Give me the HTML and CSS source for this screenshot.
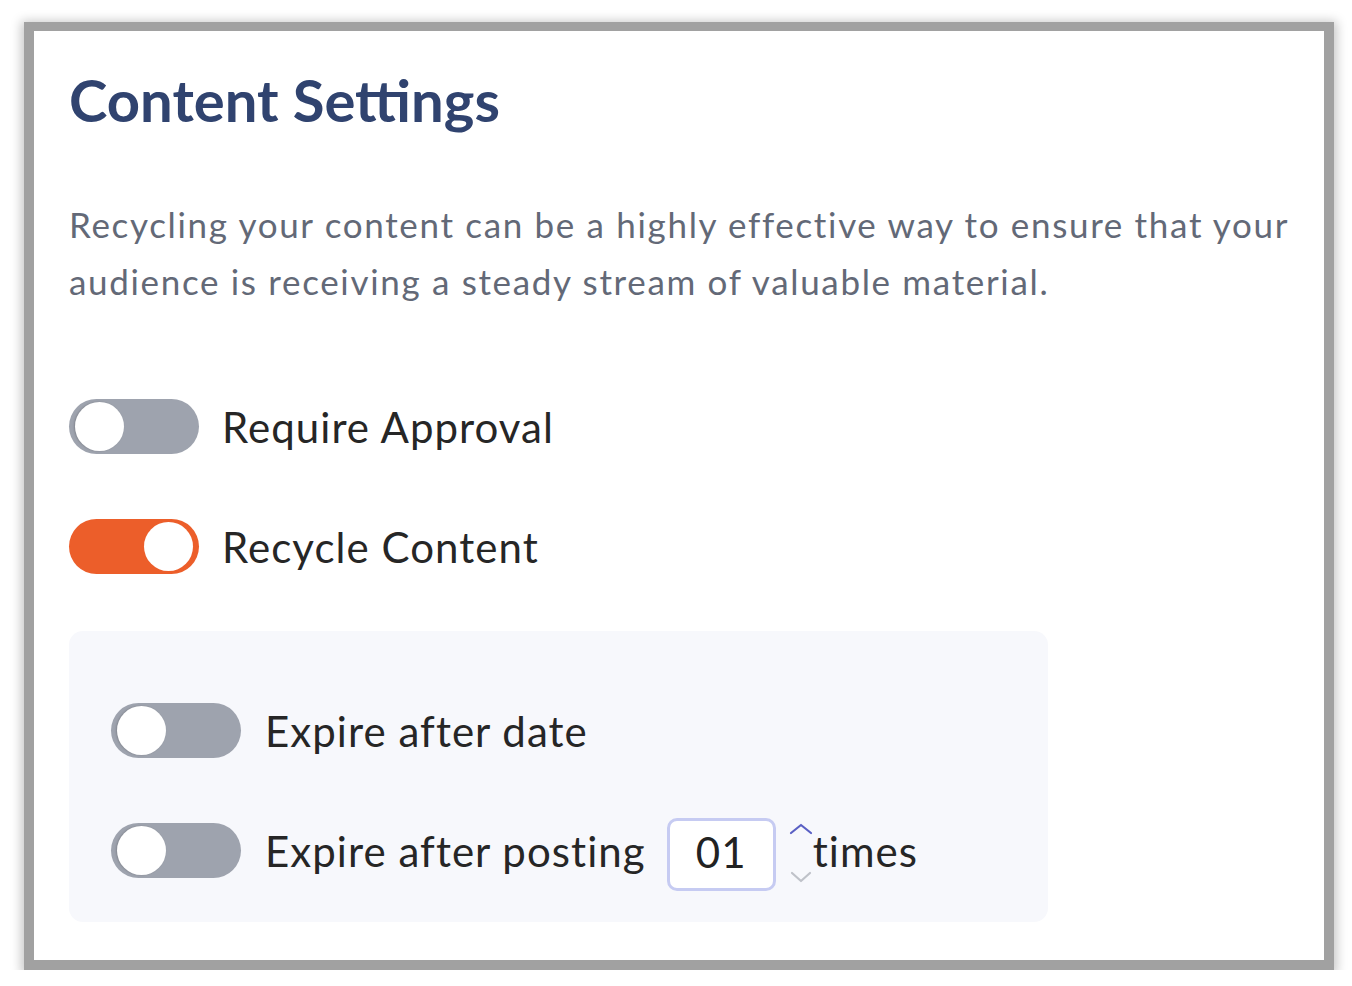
FILE: index.html
```html
<!DOCTYPE html>
<html lang="en">
<head>
<meta charset="utf-8">
<title>Content Settings</title>
<link rel="stylesheet" href="styles.css">
</head>
<body>
<div class="card">
  <h1 class="title">Content Settings</h1>
  <p class="desc">Recycling your content can be a highly effective way to ensure that your audience is receiving a steady stream of valuable material.</p>
  <div class="row row-first">
    <span class="toggle"><span class="knob"></span></span>
    <span class="label">Require Approval</span>
  </div>
  <div class="row row-second">
    <span class="toggle on"><span class="knob"></span></span>
    <span class="label">Recycle Content</span>
  </div>
  <div class="panel">
    <div class="row">
      <span class="toggle"><span class="knob"></span></span>
      <span class="label">Expire after date</span>
    </div>
    <div class="row row-second">
      <span class="toggle"><span class="knob"></span></span>
      <span class="label">Expire after posting</span>
      <span class="num">01</span>
      <span class="spin">
        <svg class="chev" width="24" height="12" viewBox="0 0 24 12"><path d="M2 10 L12 2 L22 10" fill="none" stroke="#5a60c4" stroke-width="2.2" stroke-linecap="round" stroke-linejoin="round"/></svg>
        <svg class="chev" width="24" height="12" viewBox="0 0 24 12"><path d="M3 2 L12 10 L21 2" fill="none" stroke="#bfc2c9" stroke-width="2.2" stroke-linecap="round" stroke-linejoin="round"/></svg>
      </span>
      <span class="label times">times</span>
    </div>
  </div>
</div>
</body>
</html>
```
FILE: styles.css
```css
html, body {
  margin: 0;
  padding: 0;
  background: #ffffff;
}
body {
  font-family: "Lato", "Open Sans", sans-serif;
}
.card {
  box-sizing: border-box;
  margin: 22px 0 0 24px;
  width: 1310px;
  height: 948px;
  border: 10px solid #a1a1a1;
  border-top-width: 9px;
  background: #ffffff;
  box-shadow: 0 2px 10px 3px rgba(0, 0, 0, 0.22);
  padding: 40px 0 0 35px;
}
.title {
  margin: 0;
  font-size: 58px;
  line-height: 58px;
  font-weight: 700;
  color: #30436f;
  letter-spacing: 0;
}
.desc {
  margin: 67px 0 0 0;
  font-size: 35px;
  line-height: 57px;
  letter-spacing: 1.67px;
  color: #636977;
  width: 1240px;
}
.row {
  display: flex;
  align-items: center;
  height: 55px;
  margin-top: 0;
}
.row-first {
  margin-top: 89px;
}
.row-second {
  margin-top: 65px;
}
.toggle {
  position: relative;
  box-sizing: border-box;
  flex: none;
  width: 130px;
  height: 55px;
  border-radius: 28px;
  background: #9ea3ae;
}
.toggle.on {
  background: #ec5e2a;
}
.knob {
  position: absolute;
  top: 3px;
  left: 6px;
  width: 49px;
  height: 49px;
  border-radius: 50%;
  background: #ffffff;
  box-shadow: -1px 0 2px rgba(0, 0, 0, 0.18);
}
.toggle.on .knob {
  left: auto;
  right: 6px;
  box-shadow: none;
}
.label {
  margin-left: 23px;
  font-size: 42px;
  letter-spacing: 1.05px;
  color: #262626;
  white-space: nowrap;
}
.panel {
  margin-top: 57px;
  width: 979px;
  box-sizing: border-box;
  background: #f7f8fc;
  border-radius: 14px;
  padding: 72px 42px 44px 42px;
}
.panel .label {
  margin-left: 24px;
}
.num {
  box-sizing: border-box;
  margin: 7px 0 0 21px;
  width: 109px;
  height: 73px;
  padding-bottom: 4px;
  border: 3px solid #c6cbf2;
  border-radius: 10px;
  background: #ffffff;
  font-size: 42px;
  letter-spacing: 1px;
  color: #222222;
  display: flex;
  align-items: center;
  justify-content: center;
}
.spin {
  display: flex;
  flex-direction: column;
  justify-content: space-between;
  height: 60px;
  margin: 4px 0 0 13px;
}
.chev {
  display: block;
}
.label.times {
  margin-left: 0;
}
```
